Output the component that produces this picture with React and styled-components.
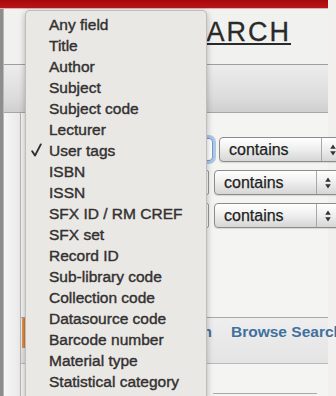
import React from "react";
import styled, { createGlobalStyle } from "styled-components";

const fields = [
  "Any field",
  "Title",
  "Author",
  "Subject",
  "Subject code",
  "Lecturer",
  "User tags",
  "ISBN",
  "ISSN",
  "SFX ID / RM CREF",
  "SFX set",
  "Record ID",
  "Sub-library code",
  "Collection code",
  "Datasource code",
  "Barcode number",
  "Material type",
  "Statistical category",
];

const rows = [
  { inputWidth: 169, gap: 6, focused: true },
  { inputWidth: 165, gap: 5 },
  { inputWidth: 165, gap: 5 },
];

function App() {
  return (
    <>
      <GlobalStyle />
      <Page>
        <RedBar />
        <Body>
          <LeftStrip />
          <Main>
            <Header>
              <Title>SEARCH</Title>
            </Header>
            <TopBand />
            <Lower>
              <Gutter />
              <Panel>
                <FormArea>
                  {rows.map((r, i) => (
                    <FormRow key={i}>
                      <TextInput $width={r.inputWidth} $focused={r.focused} />
                      <Select $gap={r.gap}>
                        <SelectLabel>contains</SelectLabel>
                        <SelectArrows>
                          <svg width="6" height="12" viewBox="0 0 6 12">
                            <path d="M3 0.5 L5.8 4.8 L0.2 4.8 Z" fill="#333" />
                            <path d="M3 11.5 L5.8 7.2 L0.2 7.2 Z" fill="#333" />
                          </svg>
                        </SelectArrows>
                      </Select>
                    </FormRow>
                  ))}
                </FormArea>
                <LinkBand>
                  <TabMark />
                  <LinkRow>
                    <NavLink $align="right">Advanced Search</NavLink>
                    <NavLink>Browse Search</NavLink>
                  </LinkRow>
                </LinkBand>
                <Footer>
                  <Rule />
                </Footer>
              </Panel>
            </Lower>
          </Main>
        </Body>

        <Menu>
          {fields.map((f) => (
            <MenuItem key={f}>
              {f === "User tags" && (
                <Check width="11" height="14" viewBox="0 0 11 14">
                  <path
                    d="M1.2 8.2 L4 12.6 L9.8 1.4"
                    fill="none"
                    stroke="#2e2e2e"
                    strokeWidth="1.9"
                    strokeLinecap="round"
                    strokeLinejoin="round"
                  />
                </Check>
              )}
              {f}
            </MenuItem>
          ))}
        </Menu>
      </Page>
    </>
  );
}

export default App;

const GlobalStyle = createGlobalStyle`
  html, body {
    margin: 0;
    padding: 0;
    background: #f1f0ee;
  }
  body {
    font-family: "Liberation Sans", Arial, sans-serif;
  }
`;

const Page = styled.div`
  position: relative;
  width: 336px;
  height: 396px;
  overflow: hidden;
  background: #f1f0ee;
`;

const RedBar = styled.div`
  width: 328px;
  height: 8px;
  background: linear-gradient(#a8080c, #b8161a);
  border-bottom: 1px solid #dcb0b0;
`;

const Body = styled.div`
  display: flex;
  height: 387px;
`;

const LeftStrip = styled.div`
  width: 4px;
  flex-shrink: 0;
  background: #8f8d8b;
  border-right: 1px solid #b9b7b5;
  box-sizing: border-box;
`;

const Main = styled.div`
  width: 324px;
  display: flex;
  flex-direction: column;
`;

const Header = styled.div`
  height: 55px;
  box-sizing: border-box;
  padding: 8px 37px 0 0;
  display: flex;
  justify-content: flex-end;
  align-items: flex-start;
  background: #f1f1ef;
`;

const Title = styled.div`
  font-size: 27px;
  line-height: 30px;
  letter-spacing: 2px;
  color: #2a2a2a;
  -webkit-text-stroke: 0.3px #2a2a2a;
  text-decoration: underline;
  text-decoration-thickness: 2px;
  text-underline-offset: 2px;
`;

const TopBand = styled.div`
  height: 49px;
  box-sizing: border-box;
  border-top: 1px solid #9e9e9e;
  border-bottom: 1px solid #a6a6a6;
  background: linear-gradient(#ececec, #dcdcdc 70%, #cfcfcf);
`;

const Lower = styled.div`
  flex: 1;
  display: flex;
`;

const Gutter = styled.div`
  width: 16px;
  flex-shrink: 0;
  background: linear-gradient(90deg, #f6f6f6, #e9e9e9);
`;

const Panel = styled.div`
  flex: 1;
  display: flex;
  flex-direction: column;
  border-left: 1px solid #b4b4b4;
  background: #f4f4f2;
  min-width: 0;
`;

const FormArea = styled.div`
  height: 204px;
  box-sizing: border-box;
  padding: 24px 0 0 23px;
  display: flex;
  flex-direction: column;
  gap: 8px;
`;

const FormRow = styled.div`
  display: flex;
  align-items: center;
  height: 25px;
`;

const TextInput = styled.div`
  width: ${(p) => p.$width}px;
  height: ${(p) => (p.$focused ? 23 : 25)}px;
  flex-shrink: 0;
  box-sizing: border-box;
  background: #fff;
  border: 1px solid ${(p) => (p.$focused ? "#6f9bd1" : "#9a9a9a")};
  border-radius: ${(p) => (p.$focused ? 4 : 2)}px;
  box-shadow: ${(p) =>
    p.$focused ? "0 0 0 3px rgba(120, 160, 215, 0.55)" : "none"};
`;

const Select = styled.div`
  margin-left: ${(p) => p.$gap}px;
  width: 127px;
  height: 25px;
  flex-shrink: 0;
  box-sizing: border-box;
  display: flex;
  border: 1px solid #8c8c8c;
  border-radius: 4px;
  background: linear-gradient(#ffffff, #f0f0f0 45%, #d6d6d6);
  box-shadow: 0 1px 1px rgba(0, 0, 0, 0.12);
`;

const SelectLabel = styled.div`
  flex: 1;
  padding-left: 9px;
  font-size: 16px;
  line-height: 23px;
  color: #1f1f1f;
  -webkit-text-stroke: 0.25px #1f1f1f;
`;

const SelectArrows = styled.div`
  width: 24px;
  flex-shrink: 0;
  border-left: 1px solid #a8a8a8;
  display: flex;
  align-items: center;
  padding-left: 8px;
  box-sizing: border-box;
`;

const LinkBand = styled.div`
  height: 47px;
  box-sizing: border-box;
  border-top: 1px solid #a9a9a9;
  border-bottom: 1px solid #b9b9b9;
  background: linear-gradient(#eeeeee, #e4e4e4);
  display: flex;
  align-items: flex-start;
`;

const TabMark = styled.div`
  width: 3px;
  height: 30px;
  margin-left: 1px;
  flex-shrink: 0;
  background: linear-gradient(90deg, #e6a05a, #d9772b);
`;

const LinkRow = styled.div`
  display: grid;
  grid-template-columns: 187px auto;
  column-gap: 19px;
  padding-top: 4px;
  white-space: nowrap;
`;

const NavLink = styled.span`
  font-size: 15.5px;
  line-height: 20px;
  font-weight: 700;
  color: #41709e;
  text-align: ${(p) => p.$align || "left"};
`;

const Footer = styled.div`
  flex: 1;
  padding-top: 29px;
  box-sizing: border-box;
`;

const Rule = styled.div`
  margin-left: 192px;
  width: 104px;
  height: 1px;
  background: #a9a9a9;
`;

const Menu = styled.div`
  position: absolute;
  left: 25px;
  top: 10px;
  width: 182px;
  height: 400px;
  box-sizing: border-box;
  padding: 3px 0 0 23px;
  background: #eae8e5;
  border: 1px solid rgba(0, 0, 0, 0.18);
  border-radius: 5px 5px 0 0;
  box-shadow: 0 2px 6px rgba(0, 0, 0, 0.28);
`;

const MenuItem = styled.div`
  position: relative;
  font-size: 15.5px;
  line-height: 21px;
  color: #333131;
  white-space: nowrap;
  -webkit-text-stroke: 0.4px #333131;
`;

const Check = styled.svg`
  position: absolute;
  left: -18px;
  top: 3px;
`;
